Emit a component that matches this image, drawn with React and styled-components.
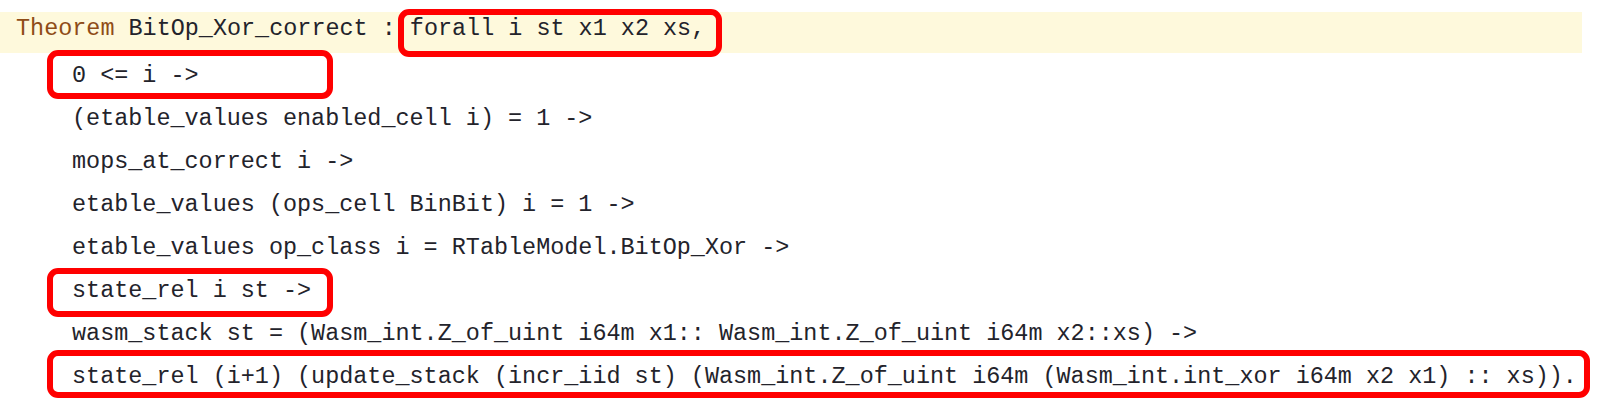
import React from 'react';
import styled, { createGlobalStyle } from 'styled-components';

const GlobalStyle = createGlobalStyle`
  html, body {
    margin: 0;
    padding: 0;
    background: #ffffff;
  }
`;

const CodeBlock = styled.pre`
  margin: 0;
  padding-top: 12px;
  font-family: 'Liberation Mono', 'DejaVu Sans Mono', monospace;
  font-size: 23.45px;
  color: #23232b;
  white-space: pre;
`;

const HeadLine = styled.div`
  width: 1582px;
  height: 41px;
  line-height: 33.5px;
  padding-left: 16px;
  box-sizing: border-box;
  background: #fef9dc;
  margin-bottom: 2.3px;
`;

const Line = styled.div`
  height: 42.9px;
  line-height: 42.9px;
  padding-left: 72px;
`;

const Keyword = styled.span`
  color: #8f4c17;
`;

// red annotation frame drawn over a piece of the code
const Mark = styled.span`
  position: relative;
  display: inline-block;

  &::after {
    content: '';
    position: absolute;
    box-sizing: border-box;
    left: ${(p) => p.$left}px;
    top: ${(p) => p.$top}px;
    width: ${(p) => p.$w}px;
    height: ${(p) => p.$h}px;
    border: 6px solid #ff0000;
    border-radius: 11px;
    pointer-events: none;
  }
`;

const App = () => {
  return (
    <>
      <GlobalStyle />
      <CodeBlock>
        <HeadLine>
          <Keyword>Theorem</Keyword> BitOp_Xor_correct :{' '}
          <Mark $left={-12} $top={-3} $w={324} $h={48}>forall i st x1 x2 xs,</Mark>
        </HeadLine>
        <Line>
          <Mark $left={-25} $top={-5.3} $w={286} $h={49}>0 &lt;= i -&gt;</Mark>
        </Line>
        <Line>(etable_values enabled_cell i) = 1 -&gt;</Line>
        <Line>mops_at_correct i -&gt;</Line>
        <Line>etable_values (ops_cell BinBit) i = 1 -&gt;</Line>
        <Line>etable_values op_class i = RTableModel.BitOp_Xor -&gt;</Line>
        <Line>
          <Mark $left={-25} $top={-1.8} $w={286} $h={49}>state_rel i st -&gt;</Mark>
        </Line>
        <Line>wasm_stack st = (Wasm_int.Z_of_uint i64m x1:: Wasm_int.Z_of_uint i64m x2::xs) -&gt;</Line>
        <Line>
          <Mark $left={-25} $top={-5.3} $w={1543} $h={48}>
            state_rel (i+1) (update_stack (incr_iid st) (Wasm_int.Z_of_uint i64m (Wasm_int.int_xor i64m x2 x1) :: xs)).
          </Mark>
        </Line>
      </CodeBlock>
    </>
  );
};

export default App;
